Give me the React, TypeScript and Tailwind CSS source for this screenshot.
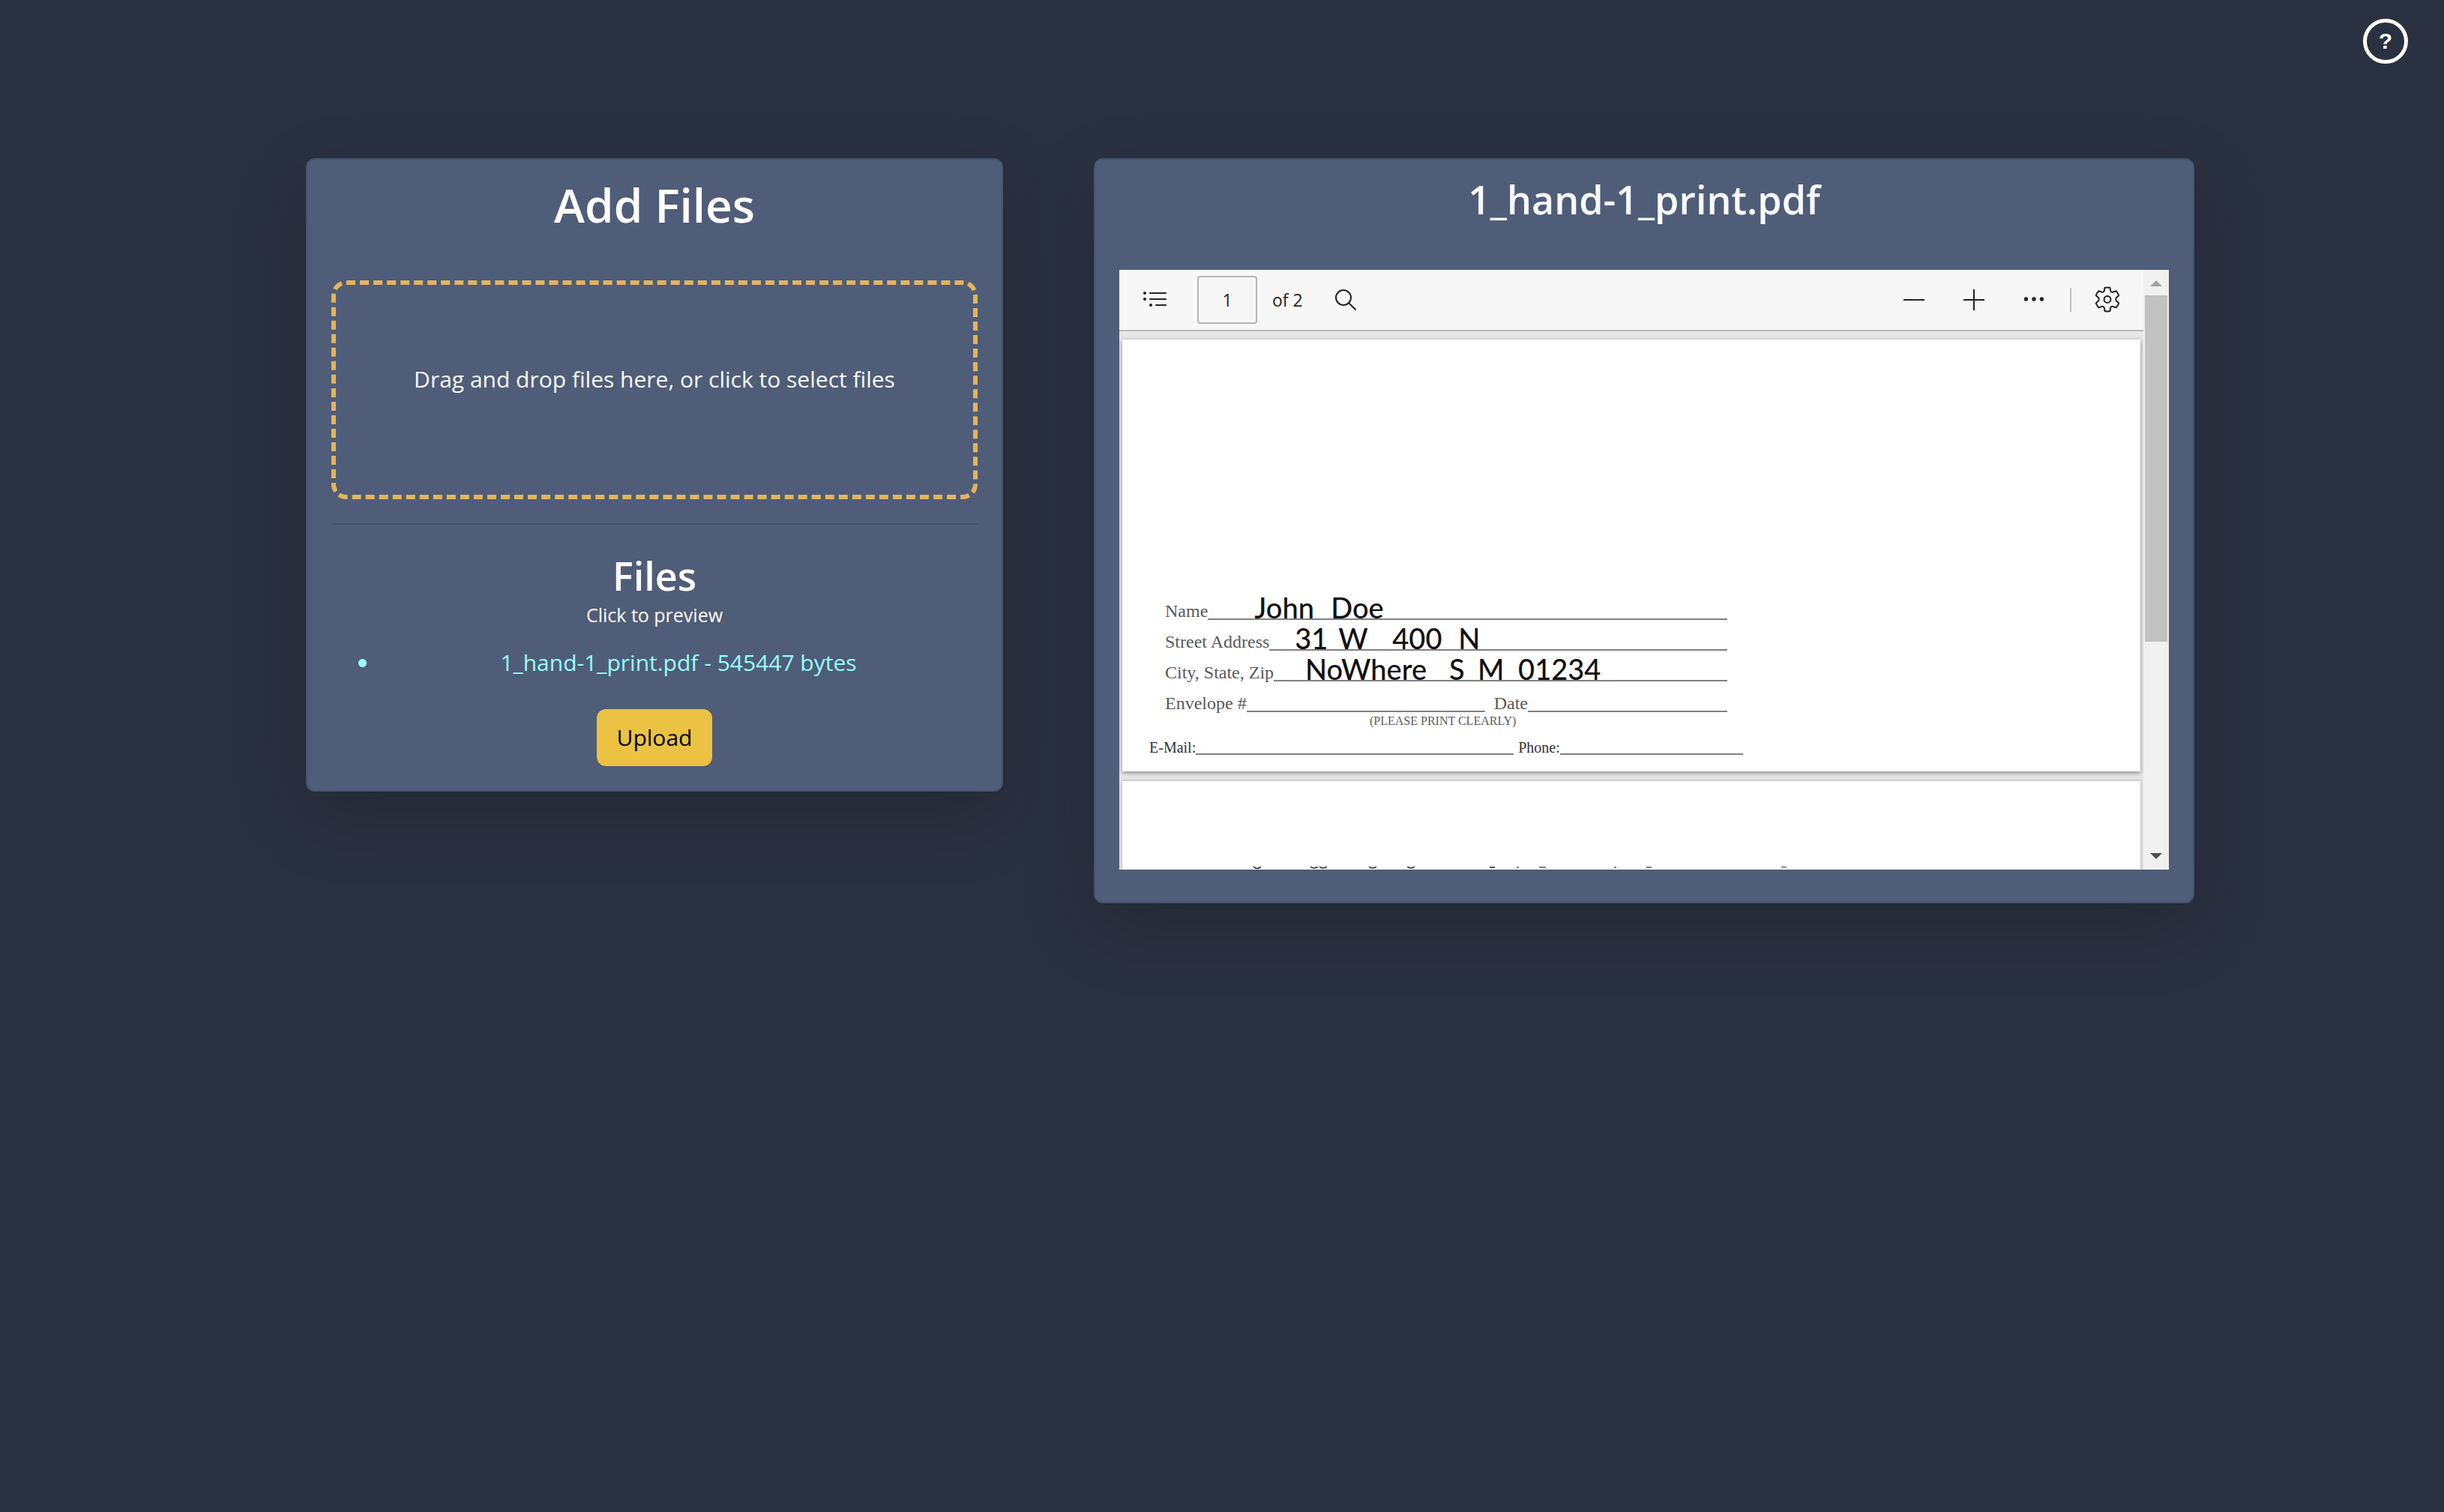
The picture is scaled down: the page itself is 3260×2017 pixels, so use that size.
import type { ReactNode } from 'react';

function ListIcon() {
  return (
    <svg width="40" height="40" viewBox="0 0 40 40" fill="none" stroke="#242424" strokeWidth="2" strokeLinecap="round">
      <path d="M13 11h21M13 19h21M21 27h13" />
      <path d="M6 11h.01M6 19h.01M14 27h.01" strokeWidth="4" />
    </svg>
  );
}

function SearchIcon() {
  return (
    <svg width="40" height="40" viewBox="0 0 40 40" fill="none" stroke="#242424" strokeWidth="2" strokeLinecap="round">
      <circle cx="17" cy="17" r="10" />
      <path d="M24.2 24.2L33 33" />
    </svg>
  );
}

function MinusIcon() {
  return (
    <svg width="40" height="40" viewBox="0 0 40 40" stroke="#242424" strokeWidth="2">
      <path d="M6 20h28" />
    </svg>
  );
}

function PlusIcon() {
  return (
    <svg width="40" height="40" viewBox="0 0 40 40" stroke="#242424" strokeWidth="2">
      <path d="M6 20h28M20 6v28" />
    </svg>
  );
}

function DotsIcon() {
  return (
    <svg width="40" height="40" viewBox="0 0 40 40" fill="#242424">
      <circle cx="9.5" cy="19" r="2.7" />
      <circle cx="20" cy="19" r="2.7" />
      <circle cx="30.5" cy="19" r="2.7" />
    </svg>
  );
}

function GearIcon() {
  return (
    <svg width="40" height="40" viewBox="0 0 40 40" fill="none" stroke="#242424" strokeWidth="2" strokeLinejoin="round">
      <path d="M16.6 3.8Q20 3 23.4 3.8L24.3 8.3Q25 10 27 9.7L31.6 8.1Q34.1 10.9 35.2 14.2L31.7 17.3Q30.6 19.5 31.7 21.2L35.2 24.3Q34.1 27.6 31.6 30.4L27 28.8Q25 28.6 24.3 30.3L23.4 35Q20 35.8 16.6 35L15.7 30.3Q15 28.6 13 28.8L8.4 30.4Q5.9 27.6 4.8 24.3L8.3 21.2Q9.4 19.5 8.3 17.3L4.8 14.2Q5.9 10.9 8.4 8.1L13 9.7Q15 10 15.7 8.3Z" />
      <circle cx="20" cy="19.4" r="4.4" />
    </svg>
  );
}

/* Ink left along the upper edge of the scan on the second page. */
function ScanSpecks() {
  return (
    <svg width="1000" height="4" viewBox="0 0 1000 4" fill="none" stroke="#222222" strokeWidth="1.5">
      <path d="M175 0q5 5 10 0M251 0q5 4 10 0M263 0q5 4 10 0M329 0q5 4 10 0M380 0q5 4 10 0M490 1h7" />
      <path d="M526 1h3M556 1h9M656 1h3M699 1h7M879 .5h7" stroke="#555555" />
    </svg>
  );
}

function ToolButton({ label, children }: { label: string; children: ReactNode }) {
  return (
    <button type="button" aria-label={label} className="flex size-10 items-center justify-center">
      {children}
    </button>
  );
}

function Card({ className, children }: { className: string; children: ReactNode }) {
  return (
    <section
      className={`rounded-xl border-2 border-[#45536b] bg-[#4f5d78] px-8 shadow-[0_32px_96px_rgba(0,0,0,0.175)] ${className}`}
    >
      {children}
    </section>
  );
}

function Blank({ className = '', children }: { className?: string; children?: ReactNode }) {
  return (
    <span
      className={`flex h-8 items-end whitespace-nowrap border-b-2 border-[#808080] font-['Lato'] text-[38px] leading-[30px] font-medium text-[#111111] ${className}`}
    >
      {children}
    </span>
  );
}

function FormRow({ children }: { children: ReactNode }) {
  return <div className="flex h-[41px] items-end whitespace-nowrap">{children}</div>;
}

function ScannedForm() {
  return (
    <div className="pt-[333px] pl-[57px] font-['Liberation_Serif',serif] text-2xl leading-6 text-[#5a5a5a]">
      <div className="w-[750px]">
        <FormRow>
          <span>Name</span>
          <Blank className="grow pl-[62px]">
            <span className="w-[102px]">John</span>
            <span>Doe</span>
          </Blank>
        </FormRow>
        <FormRow>
          <span>Street Address</span>
          <Blank className="grow pl-[34px]">
            <span className="w-[58px]">31</span>
            <span className="w-[72px]">W</span>
            <span className="w-[88px]">400</span>
            <span>N</span>
          </Blank>
        </FormRow>
        <FormRow>
          <span>City, State, Zip</span>
          <Blank className="grow pl-[42px]">
            <span className="w-[192px]">NoWhere</span>
            <span className="w-[38px]">S</span>
            <span className="w-[54px]">M</span>
            <span>01234</span>
          </Blank>
        </FormRow>
        <FormRow>
          <span>Envelope #</span>
          <Blank className="w-[318px]" />
          <span className="pl-3">Date</span>
          <Blank className="grow" />
        </FormRow>
      </div>
      <p className="pl-[273px] text-base leading-6">(PLEASE PRINT CLEARLY)</p>
      <div className="-ml-[21px] flex h-[33px] w-[792px] items-end text-xl leading-5 text-[#333333]">
        <span>E-Mail:</span>
        <Blank className="w-[424px]" />
        <span className="pl-[6px]">Phone:</span>
        <Blank className="grow" />
      </div>
    </div>
  );
}

function PdfViewer() {
  return (
    <div className="flex h-[800px] overflow-hidden bg-[#e6e6e6]">
      <div className="flex min-w-0 grow flex-col">
        <div className="flex h-[82px] shrink-0 items-center border-b-2 border-[#bbbbbb] bg-[#f7f7f7] px-7 font-['Open_Sans',sans-serif] text-[23px] text-[#242424]">
          <ToolButton label="Contents">
            <ListIcon />
          </ToolButton>
          <input
            aria-label="Page number"
            defaultValue="1"
            className="ml-9 h-16 w-20 rounded-sm border-2 border-[#b5b5b5] bg-[#f7f7f7] text-center"
          />
          <span className="ml-5 w-[78px]">of 2</span>
          <ToolButton label="Search">
            <SearchIcon />
          </ToolButton>
          <div className="ml-auto flex items-center gap-10">
            <ToolButton label="Zoom out">
              <MinusIcon />
            </ToolButton>
            <ToolButton label="Zoom in">
              <PlusIcon />
            </ToolButton>
            <ToolButton label="More">
              <DotsIcon />
            </ToolButton>
          </div>
          <span className="mx-7 h-8 w-0.5 bg-[#bbbbbb]" />
          <ToolButton label="Settings">
            <GearIcon />
          </ToolButton>
        </div>
        <div className="flex flex-col gap-[13px] px-1 pt-[11px]">
          <div className="h-[576px] shrink-0 bg-white shadow-[0_2px_6px_rgba(0,0,0,0.4)]">
            <ScannedForm />
          </div>
          <div className="flex h-[118px] shrink-0 items-end bg-white shadow-[0_0_4px_rgba(0,0,0,0.3)]">
            <ScanSpecks />
          </div>
        </div>
      </div>
      <div className="flex w-[34px] shrink-0 flex-col items-center bg-[#f1f1f1]">
        <svg width="34" height="34" viewBox="0 0 34 34" className="shrink-0">
          <path d="M9 22h16l-8-8z" fill="#a3a3a3" />
        </svg>
        <div className="h-[462px] w-[30px] bg-[#c1c1c1]" />
        <svg width="34" height="34" viewBox="0 0 34 34" className="mt-auto shrink-0">
          <path d="M9 12h16l-8 8z" fill="#505050" />
        </svg>
      </div>
    </div>
  );
}

export default function App() {
  return (
    <div className="flex min-h-screen flex-col bg-[#2a3140] font-['Open_Sans',sans-serif] text-[30px] leading-12 text-[#f8fafc]">
      <header className="flex justify-end px-12 pt-[25px]">
        <button
          type="button"
          aria-label="Help"
          className="size-[60px] rounded-full border-[5px] border-white text-center font-['Liberation_Sans',sans-serif] text-3xl leading-none font-bold text-white"
        >
          ?
        </button>
      </header>
      <main className="mt-[126px] grid grow grid-cols-[930fr_1468fr] items-start gap-[121px] pr-[333px] pl-[408px]">
        <Card className="pb-8 text-center">
          <h2 className="pt-6 text-[62px] leading-[73px] font-semibold text-white">Add Files</h2>
          <button
            type="button"
            className="mt-16 block h-[292px] w-full rounded-[20px] border-6 border-dashed border-[#e6b35a] pb-7"
          >
            Drag and drop files here, or click to select files
          </button>
          <hr className="mt-8 border-t-2 border-[#45536b]" />
          <h3 className="mt-8 text-[52px] leading-[72px] font-semibold text-white">Files</h3>
          <p className="text-[25px] leading-8 text-white">Click to preview</p>
          <ul className="mt-6 list-disc pl-16 text-[#98ffff]">
            <li>
              <button type="button">1_hand-1_print.pdf - 545447 bytes</button>
            </li>
          </ul>
          <button type="button" className="mt-[38px] h-[76px] rounded-xl bg-[#ecc243] px-[27px] text-black">
            Upload
          </button>
        </Card>
        <Card className="pb-[43px]">
          <h3 className="pt-5 pb-[61px] text-center text-[52px] leading-[66px] font-semibold">1_hand-1_print.pdf</h3>
          <PdfViewer />
        </Card>
      </main>
    </div>
  );
}
